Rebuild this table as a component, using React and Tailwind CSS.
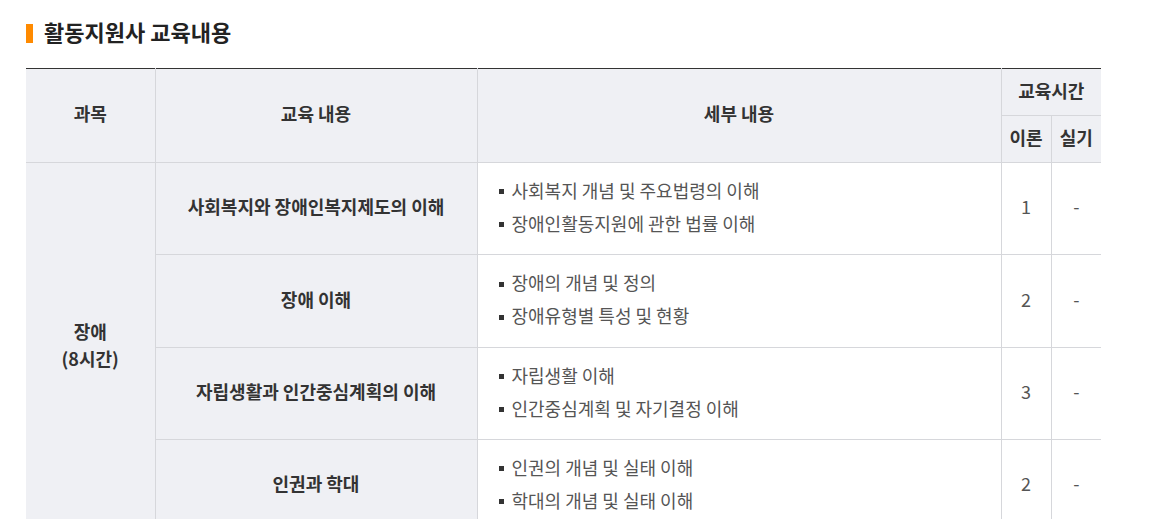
import React from "react";

const rows = [
  { title: "사회복지와 장애인복지제도의 이해", items: ["사회복지 개념 및 주요법령의 이해", "장애인활동지원에 관한 법률 이해"], theory: "1", practice: "-", h: "h-[92px]" },
  { title: "장애 이해", items: ["장애의 개념 및 정의", "장애유형별 특성 및 현황"], theory: "2", practice: "-", h: "h-[93px]" },
  { title: "자립생활과 인간중심계획의 이해", items: ["자립생활 이해", "인간중심계획 및 자기결정 이해"], theory: "3", practice: "-", h: "h-[92px]" },
  { title: "인권과 학대", items: ["인권의 개념 및 실태 이해", "학대의 개념 및 실태 이해"], theory: "2", practice: "-", h: "h-[92px]" },
];

export default function App() {
  return (
    <div
      className="w-[1159px] h-[519px] overflow-hidden bg-white pl-[26px] pt-[15px]"
      style={{ fontFamily: '"Noto Sans CJK KR", "Noto Sans", sans-serif' }}
    >
      <div className="flex items-center h-[32px]">
        <span className="block w-[7px] h-[19px] bg-[#ff8a00] mr-[11px] mt-[4px]" />
        <h2 className="text-[22px] leading-[32px] font-bold text-[#222]">활동지원사 교육내용</h2>
      </div>
      <table className="mt-[21px] w-[1075px] table-fixed border-collapse border-t border-t-[#333] text-[18px]">
        <colgroup>
          <col className="w-[129px]" />
          <col className="w-[322px]" />
          <col className="w-[524px]" />
          <col className="w-[50px]" />
          <col className="w-[50px]" />
        </colgroup>
        <thead>
          <tr className="h-[47px]">
            <th rowSpan={2} className="bg-[#eff0f4] border-r border-b border-[#d6d7db] pb-[4px] font-bold text-[#333] text-center">과목</th>
            <th rowSpan={2} className="bg-[#eff0f4] border-r border-b border-[#d6d7db] pb-[4px] font-bold text-[#333] text-center">교육 내용</th>
            <th rowSpan={2} className="bg-[#eff0f4] border-r border-b border-[#d6d7db] pb-[4px] font-bold text-[#333] text-center">세부 내용</th>
            <th colSpan={2} className="bg-[#eff0f4] border-b border-[#d6d7db] pb-[4px] font-bold text-[#333] text-center">교육시간</th>
          </tr>
          <tr className="h-[47px]">
            <th className="bg-[#eff0f4] border-r border-b border-[#d6d7db] pb-[4px] font-bold text-[#333] text-center">이론</th>
            <th className="bg-[#eff0f4] border-b border-[#d6d7db] pb-[4px] font-bold text-[#333] text-center">실기</th>
          </tr>
        </thead>
        <tbody>
          {rows.map((r, i) => (
            <tr key={i} className={r.h}>
              {i === 0 && (
                <td rowSpan={4} className="bg-[#eff0f4] border-r border-b border-[#d6d7db] pb-[4px] font-bold text-[#333] text-center leading-[27px] align-middle">
                  장애
                  <br />
                  (8시간)
                </td>
              )}
              <td className="bg-[#eff0f4] border-r border-b border-[#d6d7db] pb-[4px] font-bold text-[#333] text-center">{r.title}</td>
              <td className="border-r border-b border-[#d6d7db] pl-[21px] pb-[4px] text-[#555]">
                <ul className="flex flex-col">
                  {r.items.map((it, j) => (
                    <li key={j} className="flex items-center h-[33px]">
                      <span className="block w-[5px] h-[5px] bg-[#333] mr-[8px] mt-[3px]" />
                      <span>{it}</span>
                    </li>
                  ))}
                </ul>
              </td>
              <td className="border-r border-b border-[#d6d7db] pb-[4px] text-center text-[#555]">{r.theory}</td>
              <td className="border-b border-[#d6d7db] pb-[4px] text-center text-[#555]">{r.practice}</td>
            </tr>
          ))}
        </tbody>
      </table>
    </div>
  );
}
